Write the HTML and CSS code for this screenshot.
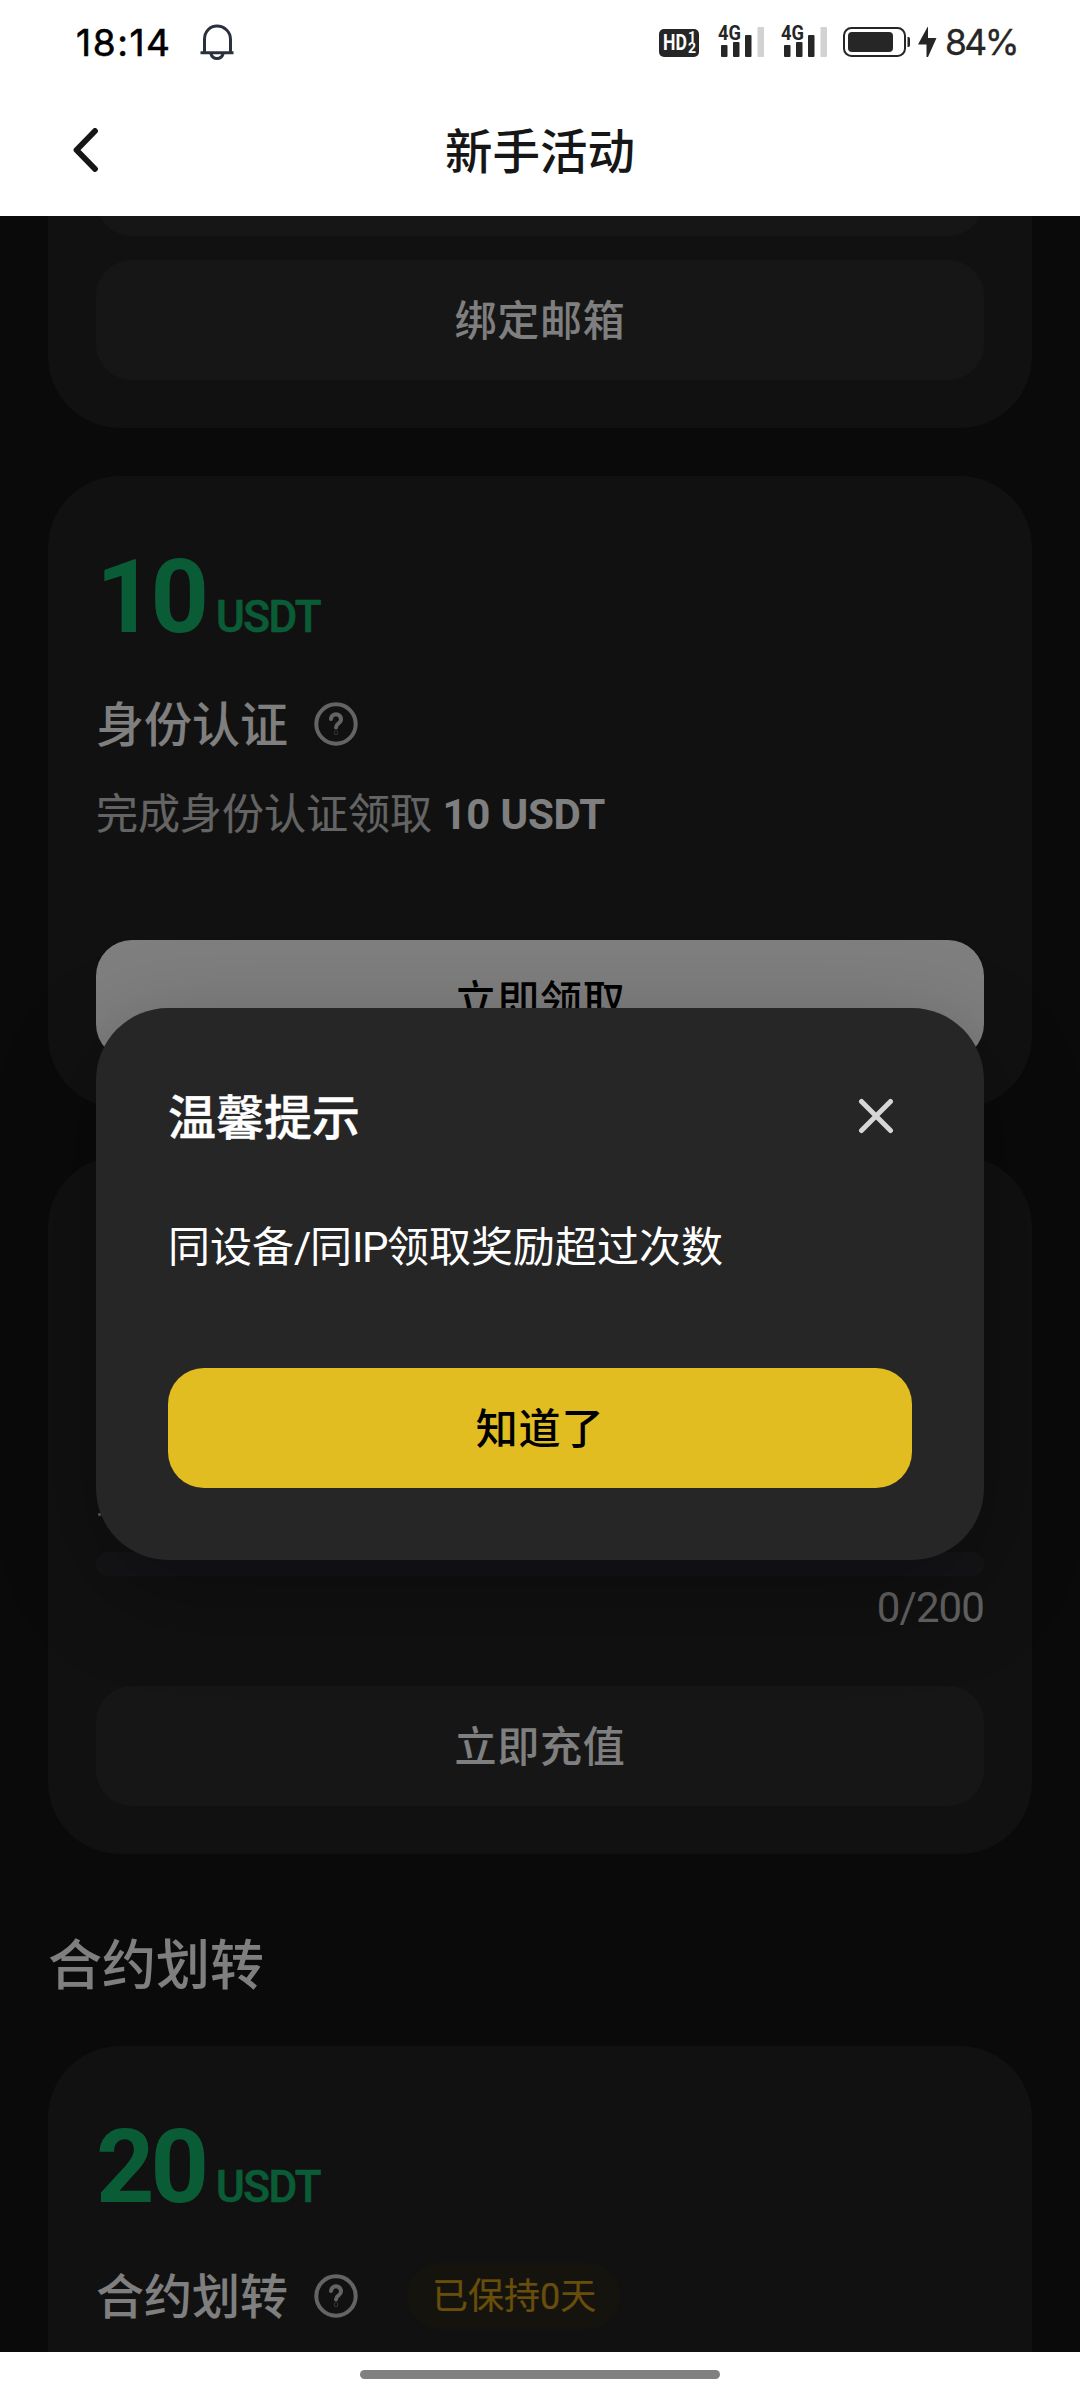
FILE: index.html
```html
<!DOCTYPE html>
<html lang="zh-CN">
<head>
<meta charset="utf-8">
<title>新手活动</title>
<link rel="stylesheet" href="styles.css">
</head>
<body>
<div class="screen">
  <header class="statusbar">
    <div class="status-left">
      <span class="clock">18:14</span>
      <svg class="bell" width="34" height="38" viewBox="0 0 34 38" fill="none" stroke="#2b303d" stroke-width="3"><path d="M4.500 29V15.500C4.500 7.500 10 2 17 2s13.500 5.500 13.500 13.500V29M.5 28.700h33M10.800 29.500c1 3.500 3 5 6.200 5s5.200-1.500 6.200-5"/></svg>
    </div>
    <div class="status-right">
      <span class="hd"><span class="hd-label">HD</span><span class="hd-sims"><span>1</span><span>2</span></span></span>
      <span class="signal"><span class="net">4G</span><svg width="44" height="31" viewBox="0 0 44 31" fill="#262626"><rect x="0" y="19" width="6.500" height="12" rx="1"/><rect x="12" y="16" width="6.500" height="15" rx="1"/><rect x="24" y="9" width="6.500" height="22" rx="1"/><rect x="36.500" y="1" width="6.500" height="30" rx="1" fill="#d2d2d2"/></svg></span>
      <span class="signal"><span class="net">4G</span><svg width="44" height="31" viewBox="0 0 44 31" fill="#262626"><rect x="0" y="19" width="6.500" height="12" rx="1"/><rect x="12" y="16" width="6.500" height="15" rx="1"/><rect x="24" y="9" width="6.500" height="22" rx="1"/><rect x="36.500" y="1" width="6.500" height="30" rx="1" fill="#d2d2d2"/></svg></span>
      <svg class="battery" width="67" height="30" viewBox="0 0 67 30"><rect x="1" y="1" width="61" height="28" rx="7.500" fill="none" stroke="#262626" stroke-width="2"/><rect x="5" y="5" width="45" height="20" rx="4" fill="#262626"/><path d="M64.500 10h1q1.500 0 1.500 2v6q0 2-1.500 2h-1z" fill="#262626"/></svg>
      <svg class="bolt" width="19" height="30" viewBox="0 0 19 30"><path d="M9.500 0L0 17.500h8.500V30h1.500L18.500 11H10V0z" fill="#262626"/></svg>
      <span class="percent">84%</span>
    </div>
  </header>

  <nav class="navbar">
    <svg class="back" width="26" height="44" viewBox="0 0 26 44" fill="none" stroke="#161616" stroke-width="5.800" stroke-linecap="round" stroke-linejoin="round"><path d="M22 3L3.500 22 22 41"/></svg>
    <h1 class="nav-title">新手活动</h1>
  </nav>

  <main class="content">
    <section class="card card-top">
      <div class="btn btn-cut"></div>
      <div class="btn">绑定邮箱</div>
    </section>

    <section class="card">
      <div class="amount"><span class="number">10</span><span class="unit">USDT</span></div>
      <div class="heading">
        <h2 class="card-title">身份认证</h2>
        <svg class="help" width="44" height="44" viewBox="0 0 44 44" fill="none" stroke="#c8c8c8" stroke-width="4" stroke-linecap="round"><circle cx="22" cy="22" r="19.700"/><path d="M17 17a5 4.800 0 1 1 8 4c-2 1.500-3 2-3 4.500"/><circle cx="22" cy="30.600" r=".2"/></svg>
      </div>
      <p class="desc">完成身份认证领取 <b>10 USDT</b></p>
      <div class="btn btn-light">立即领取</div>
    </section>

    <section class="card card-deposit">
      <div class="dot"></div>
      <div class="progress"></div>
      <div class="count">0/200</div>
      <div class="btn">立即充值</div>
    </section>

    <h2 class="section-title">合约划转</h2>

    <section class="card card-transfer">
      <div class="amount"><span class="number">20</span><span class="unit">USDT</span></div>
      <div class="heading">
        <h2 class="card-title">合约划转</h2>
        <svg class="help" width="44" height="44" viewBox="0 0 44 44" fill="none" stroke="#c8c8c8" stroke-width="4" stroke-linecap="round"><circle cx="22" cy="22" r="19.700"/><path d="M17 17a5 4.800 0 1 1 8 4c-2 1.500-3 2-3 4.500"/><circle cx="22" cy="30.600" r=".2"/></svg>
        <span class="badge">已保持0天</span>
      </div>
    </section>

    <div class="scrim">
      <div class="dialog">
        <div class="dialog-head">
          <h2 class="dialog-title">温馨提示</h2>
          <svg class="close" width="36" height="36" viewBox="0 0 36 36" stroke="#d6d6d6" stroke-width="5" stroke-linecap="round"><path d="M3.500 3.500l29 29M32.500 3.500l-29 29"/></svg>
        </div>
        <p class="dialog-text">同设备<span class="latin">/</span>同<span class="latin">IP</span>领取奖励超过次数</p>
        <div class="dialog-btn">知道了</div>
      </div>
    </div>
  </main>

  <footer class="homebar"><div class="pill"></div></footer>
</div>
</body>
</html>
```
FILE: styles.css
```css
* { box-sizing: border-box; }

body, h1, h2, p { margin: 0; font-weight: 400; }

body {
  font-family: Roboto, "Noto Sans CJK SC", sans-serif;
  background: #fff;
}

.screen {
  display: flex;
  flex-direction: column;
  width: 1080px;
  height: 2400px;
  overflow: hidden;
}

/* system status bar */
.statusbar {
  display: flex;
  justify-content: space-between;
  height: 84px;
  padding: 0 64px 0 76px;
}

.status-left, .status-right { display: flex; align-items: flex-start; }
.status-left > *, .status-right > * { flex: none; }

.clock {
  padding-top: 19px;
  width: 98px;
  margin-right: 26px;
  font: 400 37px/48px Inter, sans-serif;
  letter-spacing: 1.600px;
  color: #000;
  -webkit-text-stroke: .6px;
}

.bell { margin-top: 24px; }

.hd {
  display: flex;
  align-items: center;
  width: 40px;
  height: 28px;
  margin: 29px 22px 0 0;
  padding-left: 4px;
  border-radius: 5px;
  background: #262626;
  color: #fff;
  font: 700 22px/28px Roboto, sans-serif;
}

.hd-label { width: 25px; transform: scaleX(.8); transform-origin: left; }

.hd-sims {
  display: flex;
  flex-direction: column;
  font-size: 14px;
  line-height: 11.500px;
}

.signal { position: relative; margin: 26px 19px 0 0; width: 44px; height: 31px; }
.signal + .signal { margin-right: 15px; }
.signal svg { display: block; }

.net {
  position: absolute;
  left: -3px;
  top: -3px;
  font: 700 21px/20px Roboto, sans-serif;
  transform: scaleX(.87);
  transform-origin: left;
  color: #262626;
}

.battery { margin: 27px 7.500px 0 0; }
.bolt { margin: 27px 8.500px 0 0; }

.percent {
  padding-top: 19px;
  width: 71px;
  font: 400 35.500px/48px Inter, sans-serif;
  letter-spacing: -2.600px;
  color: #262626;
  -webkit-text-stroke: .3px;
}

/* page header */
.navbar {
  display: grid;
  grid-template-columns: 168px 1fr 168px;
  align-items: center;
  height: 132px;
}

.back { margin-left: 73px; }

.nav-title {
  padding-top: 5px;
  font-size: 47.500px;
  line-height: 72px;
  font-weight: 500;
  text-align: center;
  color: #161616;
}

/* scrolling content */
.content {
  position: relative;
  height: 2136px;
  overflow: hidden;
  padding: 0 48px;
  background: #141414;
  color: #fff;
}

.card {
  margin-bottom: 48px;
  padding: 61px 48px 48px;
  border-radius: 72px;
  background: #222;
}

.card-top {
  display: flex;
  flex-direction: column;
  gap: 24px;
  height: 212px;
  padding-top: 0;
  border-radius: 0 0 72px 72px;
}

.btn {
  height: 120px;
  flex: none;
  padding-top: 4px;
  border-radius: 36px;
  background: #2d2d2d;
  font-size: 42px;
  line-height: 116px;
  font-weight: 500;
  letter-spacing: .8px;
  text-align: center;
}

.btn-cut { margin-top: -100px; }
.btn-light { background: #fff; color: #000; }

.amount {
  display: flex;
  align-items: baseline;
  gap: 11px;
  height: 120px;
  line-height: 120px;
  color: #14b86e;
}

.number { font-size: 102px; font-weight: 700; letter-spacing: -4px; }
.unit { font-size: 44px; font-weight: 500; letter-spacing: -1.500px; -webkit-text-stroke: .6px; }

.heading {
  display: flex;
  align-items: center;
  height: 66px;
  margin-top: 34px;
}

.card-title {
  padding-top: 4px;
  font-size: 48px;
  line-height: 62px;
  font-weight: 500;
}

.help { margin-left: 26px; }

.badge {
  height: 66px;
  margin-left: 50px;
  padding: 3px 24px 0;
  border-radius: 33px;
  background: #2a271d;
  font-size: 36px;
  line-height: 63px;
  color: #d09c14;
  -webkit-text-stroke: .2px;
}

.desc {
  margin-top: 25px;
  font-size: 42px;
  line-height: 66px;
  color: #c8c8c8;
  -webkit-text-stroke: .2px;
}

.desc b {
  font-weight: 700;
  color: #fff;
  letter-spacing: -.2px;
  -webkit-text-stroke: 0;
}

.card .btn-light { margin-top: 92px; }

.card-deposit { height: 698px; padding: 357px 48px 48px; }

.dot {
  width: 3px;
  height: 3px;
  margin: 0 0 36px 2px;
  border-radius: 1px;
  background: #b4b4b4;
}

.progress { height: 24px; border-radius: 12px; background: #2a2a30; }

.count {
  height: 110px;
  padding-top: 5px;
  font-size: 42px;
  line-height: 54px;
  letter-spacing: -.9px;
  text-align: right;
  color: #c8c8c8;
}

.section-title {
  height: 144px;
  padding-top: 29px;
  font-size: 54px;
  line-height: 72px;
  font-weight: 500;
}

.card-transfer { height: 440px; }
.card-transfer .heading { margin-top: 36px; }

/* modal */
.scrim {
  position: absolute;
  inset: 0;
  display: flex;
  align-items: center;
  justify-content: center;
  background: rgba(0, 0, 0, .5);
}

.dialog {
  width: 888px;
  height: 552px;
  padding: 72px;
  border-radius: 72px;
  background: #262626;
  box-shadow: 0 33px 100px rgba(0, 0, 0, .32);
}

.dialog-head {
  display: flex;
  align-items: center;
  justify-content: space-between;
  height: 72px;
  padding-right: 18px;
}

.dialog-title {
  padding-top: 6px;
  font-size: 48px;
  line-height: 66px;
  font-weight: 500;
  -webkit-text-stroke: .4px;
}

.dialog-text {
  margin-top: 60px;
  height: 156px;
  font-size: 42px;
  line-height: 72px;
}

.latin { letter-spacing: -1.400px; }

.dialog-btn {
  height: 120px;
  padding-top: 4px;
  border-radius: 36px;
  background: #e1bd22;
  color: #000;
  font-size: 42px;
  line-height: 116px;
  font-weight: 500;
  letter-spacing: .8px;
  text-align: center;
}

/* gesture bar */
.homebar {
  display: flex;
  justify-content: center;
  height: 48px;
  padding-top: 18px;
  background: #fff;
}

.pill { width: 360px; height: 9px; border-radius: 5px; background: #808080; }
```
